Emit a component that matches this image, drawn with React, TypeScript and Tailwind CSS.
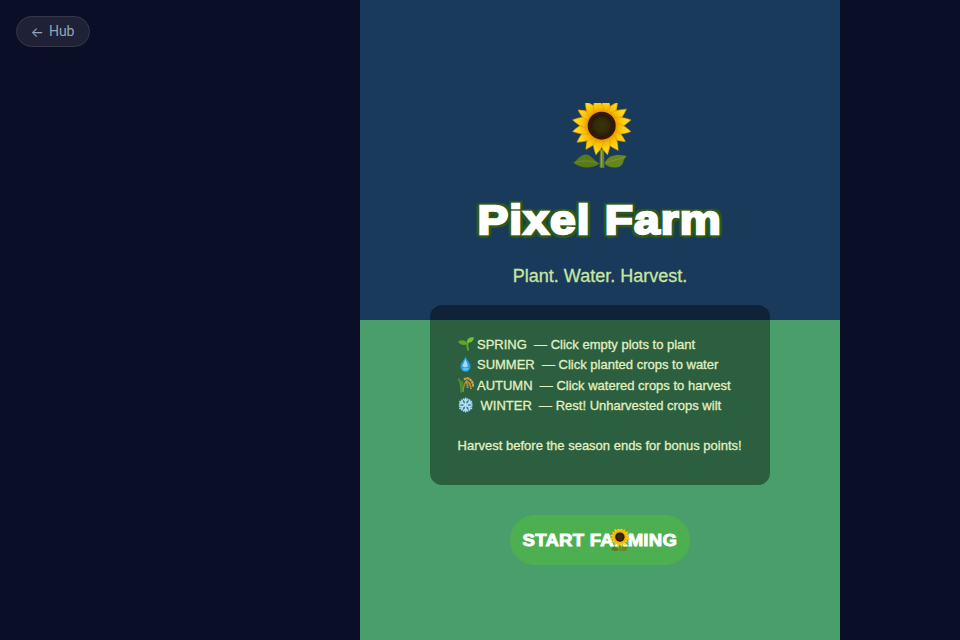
import type { ReactNode } from 'react';

const SEASONS: { icon: ReactNode; name: string; hint: string; gap: string }[] = [
  { icon: <Seedling />, name: 'SPRING', hint: '— Click empty plots to plant', gap: 'w-[19.4px]' },
  { icon: <Droplet />, name: 'SUMMER', hint: '— Click planted crops to water', gap: 'w-[19.4px]' },
  { icon: <Rice />, name: 'AUTUMN', hint: '— Click watered crops to harvest', gap: 'w-[19.4px]' },
  { icon: <Snowflake />, name: 'WINTER', hint: '— Rest! Unharvested crops wilt', gap: 'w-[23px]' },
];

const PETALS = Array.from({ length: 16 }, (_, i) => 11.25 + i * 22.5);

function Sunflower({ className, id }: { className: string; id: string }) {
  return (
    <svg viewBox="0 0 60 66" className={className} aria-hidden="true">
      <defs>
        <radialGradient id={`${id}-petal`} gradientUnits="userSpaceOnUse" cx="29.7" cy="22.7" r="30">
          <stop offset="0.44" stopColor="#e39400" />
          <stop offset="0.6" stopColor="#f9bc05" />
          <stop offset="0.8" stopColor="#ffd914" />
          <stop offset="1" stopColor="#ffdd22" />
        </radialGradient>
        <radialGradient id={`${id}-seed`}>
          <stop offset="0" stopColor="#38340c" />
          <stop offset="0.55" stopColor="#302a08" />
          <stop offset="0.78" stopColor="#2c1606" />
          <stop offset="1" stopColor="#3c1a05" />
        </radialGradient>
      </defs>
      <path d="M28 46h4l.4 18.6q-2.4 1.4-4.8 0Z" fill="#657f2b" />
      <path d="M29.6 47v17" stroke="#91a844" strokeWidth="1.2" />
      <path d="M27.5 60.5C21 66 9 66 1 59.5C5 58.5 6 53 13 51.5C19 51 21 57 27.5 60.5Z" fill="#587a1c" />
      <path d="M25 60Q15 56 3 59.5" fill="none" stroke="#6c8a26" strokeWidth="1.3" />
      <path d="M32.5 60.5C37 66 49 66 51 60Q52 55 55 53C46 51 36 51 32.5 60.5Z" fill="#668420" />
      <path d="M34 60Q43 57 53 54" fill="none" stroke="#7c952c" strokeWidth="1.3" />
      {/* shaded petals sit behind the bright ones */}
      {PETALS.map((a) => (
        <path
          key={a}
          d="M25 11C23.6 4 27 -1 29.7 -6C32.5 -1 35.8 4 34.4 11Z"
          fill="#e39a08"
          transform={`rotate(${a} 29.7 22.7)`}
        />
      ))}
      {PETALS.map((a, i) => (
        <path
          key={a}
          d={
            i % 4 === 1
              ? 'M26.6 11C24.6 4 27.4 -1 29.7 -5.5C32.1 -1 34.8 4 32.8 11Z'
              : 'M25 11C23.2 4 27 -2 29.7 -7C32.5 -2 36.2 4 34.4 11Z'
          }
          fill={`url(#${id}-petal)`}
          stroke="#e09a06"
          strokeWidth="0.6"
          transform={`rotate(${a} 29.7 22.7)`}
        />
      ))}
      <circle cx="29.7" cy="22.7" r="14" fill={`url(#${id}-seed)`} />
      <circle cx="29.7" cy="22.7" r="11.5" fill="none" stroke="#48220a" strokeWidth="0.7" strokeDasharray="1 1.3" />
      <circle cx="29.7" cy="22.7" r="5" fill="none" stroke="#403b10" strokeWidth="0.6" strokeDasharray="1 1" />
    </svg>
  );
}

function Seedling() {
  return (
    <svg viewBox="0 0 16 16" className="size-4" aria-hidden="true">
      <path d="M10.3 14.5Q8.5 10 9.8 5" fill="none" stroke="#6aa522" strokeWidth="1.9" />
      <path d="M9.500 8C6 10 1.5 8.5 0 5.5Q7 2 9.5 8Z" fill="#5aa91e" />
      <path d="M9 6.8C8.5 2 12 1 16 1.2C15.5 5 13 7 9 6.8Z" fill="#74c128" />
    </svg>
  );
}

function Droplet() {
  return (
    <svg viewBox="0 0 16 16" className="size-4 overflow-visible" aria-hidden="true">
      <path d="M7.5 -1C6.8 3 2.5 5.500 2.5 9.5A5 5.2 0 0 0 12.5 9.5C12.5 5.5 8.3 3 7.5 -1Z" fill="#239be6" />
      <path d="M7.2 2C6.6 5.5 4.5 7 4.5 9.5Q6 11 10 9.5Q9.5 6 7.2 2Z" fill="#a2daf8" />
      <ellipse cx="7.6" cy="12" rx="3" ry="1.6" fill="#4cc8fb" />
    </svg>
  );
}

function Rice() {
  return (
    <svg viewBox="0 0 16 16" className="size-4" aria-hidden="true">
      <path d="M3.2 15.5Q3.5 7 0.5 1.5M4 15Q3.5 8 4.5 3.5M4.5 15Q5 9 7 6" fill="none" stroke="#4f8b30" strokeWidth="1.9" />
      <path d="M5 15Q6 6 9 3.5" fill="none" stroke="#9a9136" strokeWidth="1.1" />
      <path d="M6 2.5Q10 0 12.5 3Q15 5 15.5 10" fill="none" stroke="#dba143" strokeWidth="2.2" strokeDasharray="2.6 0.4" />
      <path d="M8 4.5Q12 4 13 12M7.5 5Q9.8 6 9.5 11" fill="none" stroke="#c99340" strokeWidth="1.8" strokeDasharray="2.4 0.4" />
    </svg>
  );
}

function Snowflake() {
  return (
    <svg viewBox="0 0 16 16" className="size-4" aria-hidden="true">
      <circle cx="7.7" cy="8" r="7.3" fill="#4595c2" opacity="0.6" />
      <g fill="none" stroke="#b4e0f5" strokeWidth="1.5" strokeLinecap="round">
        {[0, 60, 120, 180, 240, 300].map((a) => (
          <path key={a} d="M7.7 8V1.300M5.6 2.300L7.7 4.5L9.8 2.3" transform={`rotate(${a} 7.7 8)`} />
        ))}
      </g>
    </svg>
  );
}

export default function App() {
  return (
    <div className="relative flex h-[640px] w-[960px] overflow-hidden bg-[#0a0e27] pl-[360px] font-['Liberation_Sans',Arial,sans-serif]">
      <a
        href="#hub"
        className="absolute left-4 top-4 flex h-[31px] w-[74px] items-center justify-center gap-[5px] rounded-full border border-[#363849] bg-[#1f2136] font-['Roboto',sans-serif] text-[14px] text-[#94a3b8]"
      >
        <span className="-ml-px font-['Inter',sans-serif]">←</span>
        <span>Hub</span>
      </a>

      <main className="flex w-[480px] flex-col items-center bg-[linear-gradient(#1a3a5c_50%,#4a9e6b_50%)] pt-[103px]">
        <Sunflower id="hero" className="ml-1 h-[66px] w-[60px] shrink-0" />

        <h1 className="mt-[25px] h-[52px] scale-x-[1.125] whitespace-nowrap text-[41px] font-bold leading-[52px] tracking-[1px] text-white [-webkit-text-stroke:2.3px_white] [text-shadow:3.4px_0_1px_#2d5a1b,-3.4px_0_1px_#2d5a1b,0_3.7px_1px_#2d5a1b,0_-3.5px_1px_#2d5a1b,3px_3px_1px_#2d5a1b,-3px_3px_1px_#2d5a1b,3px_-3px_1px_#2d5a1b,-3px_-3px_1px_#2d5a1b]">
          Pixel Farm
        </h1>
        <p className="mt-[17.5px] h-6 text-[18px] leading-6 text-[#c8e6a0] [-webkit-text-stroke:0.3px_#c8e6a0]">Plant. Water. Harvest.</p>

        {/* Season rules */}
        <section className="mt-[17.5px] h-[180px] w-[340px] shrink-0 rounded-xl bg-black/40 pl-[27.6px] pt-[29px] text-[13px] leading-[20.4px] text-[#e0f0c0] [-webkit-text-stroke:0.3px_#e0f0c0]">
          {SEASONS.map((s) => (
            <div key={s.name} className="flex h-[20.4px] items-center whitespace-pre">
              <span className={`shrink-0 ${s.gap}`}>{s.icon}</span>
              <span className="pt-[1.6px]">{`${s.name}  ${s.hint}`}</span>
            </div>
          ))}
          <p className="mt-[20.4px] whitespace-nowrap">Harvest before the season ends for bonus points!</p>
        </section>

        <button className="relative mt-[30px] flex h-[50px] w-[180px] shrink-0 items-center justify-center whitespace-nowrap rounded-full bg-[#4caf50] text-[17px] font-bold text-white">
          <span className="scale-x-[1.09] pt-[2px] tracking-[0.25px] [-webkit-text-stroke:0.9px_white]">START FARMING</span>
          {/* sunflower cursor */}
          <Sunflower id="cursor" className="absolute left-[100px] top-[14px] h-[23px] w-5" />
        </button>
      </main>
    </div>
  );
}
